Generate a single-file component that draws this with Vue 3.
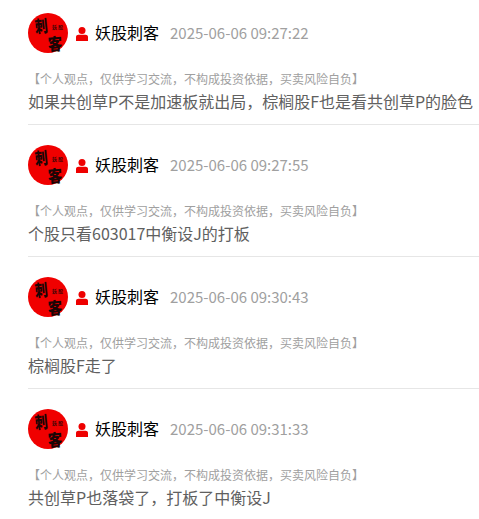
<template>
  <div class="list">
    <div v-for="item in items" :key="item.time" class="item">
      <div class="head">
        <div class="avatar">
          <span class="ch ch-top">刺</span>
          <span class="ch ch-bottom">客</span>
          <span class="mini">妖股</span>
        </div>
        <svg class="user-icon" width="12" height="14" viewBox="0 0 12 14">
          <circle cx="6" cy="3.6" r="3.5" fill="#ee0000" />
          <path d="M0 14V10C0 8.6 1.2 7.8 2.4 7.8H9.6C10.8 7.8 12 8.6 12 10V14Z" fill="#ee0000" />
        </svg>
        <span class="name">妖股刺客</span>
        <span class="time">{{ item.time }}</span>
      </div>
      <div class="note">【个人观点，仅供学习交流，不构成投资依据，买卖风险自负】</div>
      <div class="text">{{ item.text }}</div>
    </div>
  </div>
</template>

<script setup>
const items = [
  { time: '2025-06-06 09:27:22', text: '如果共创草P不是加速板就出局，棕榈股F也是看共创草P的脸色' },
  { time: '2025-06-06 09:27:55', text: '个股只看603017中衡设J的打板' },
  { time: '2025-06-06 09:30:43', text: '棕榈股F走了' },
  { time: '2025-06-06 09:31:33', text: '共创草P也落袋了，打板了中衡设J' }
]
</script>

<style scoped>
.list {
  width: 479px;
  padding-left: 28px;
  box-sizing: border-box;
  font-family: "Noto Sans CJK SC", sans-serif;
}
.item {
  height: 125px;
  margin-bottom: 7px;
  box-sizing: border-box;
  padding-top: 13px;
  border-bottom: 1px solid #e6e6e6;
}
.item:last-child {
  border-bottom: none;
}
.head {
  display: flex;
  align-items: center;
  height: 40px;
}
.avatar {
  position: relative;
  width: 40px;
  height: 40px;
  border-radius: 50%;
  background: #f00000;
  flex-shrink: 0;
}
.ch {
  position: absolute;
  font-weight: 900;
  font-size: 16px;
  line-height: 16px;
  color: #1a0505;
}
.ch-top {
  left: 5px;
  top: 4px;
  transform: rotate(-6deg) scale(0.8, 1.05);
}
.ch-bottom {
  left: 19px;
  top: 22px;
  transform: rotate(-4deg) scale(0.9, 1.05);
}
.mini {
  position: absolute;
  left: 24px;
  top: 10px;
  font-size: 5px;
  line-height: 7px;
  letter-spacing: 1px;
  font-weight: 700;
  color: #3a0606;
  white-space: nowrap;
}
.user-icon {
  margin-left: 8px;
  margin-top: 1px;
  flex-shrink: 0;
}
.name {
  margin-left: 7px;
  margin-top: -2px;
  font-size: 16px;
  color: #000;
}
.time {
  margin-left: 11px;
  margin-top: -2px;
  font-size: 15px;
  color: #a0a0a0;
}
.note {
  margin-top: 18px;
  font-size: 12px;
  line-height: 16px;
  color: #a0a0a0;
  white-space: nowrap;
}
.text {
  margin-top: 3px;
  font-size: 16px;
  line-height: 22px;
  color: #606060;
  white-space: nowrap;
}
</style>

<style>
body {
  background: #fff;
}
</style>
